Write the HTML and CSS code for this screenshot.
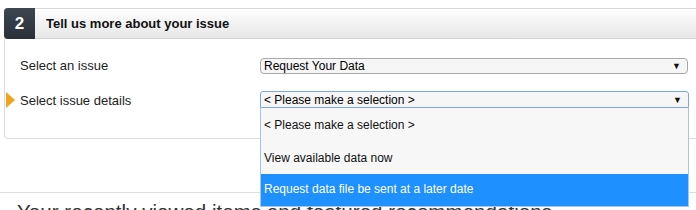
FILE: index.html
```html
<!DOCTYPE html>
<html>
<head>
<meta charset="utf-8">
<link rel="stylesheet" href="styles.css">
</head>
<body>
<div class="page">
  <section class="panel">
    <header class="panel-head">
      <span class="step">2</span>
      <h2 class="title">Tell us more about your issue</h2>
    </header>
    <div class="panel-body">
      <div class="row row-first">
        <label class="label">Select an issue</label>
        <div class="select">
          <span class="select-text">Request Your Data</span>
          <span class="arrow">&#9660;</span>
        </div>
      </div>
      <div class="row row-active">
        <span class="marker"></span>
        <label class="label">Select issue details</label>
        <div class="select-wrap">
          <div class="select select-focus">
            <span class="select-text">&lt; Please make a selection &gt;</span>
            <span class="arrow">&#9660;</span>
          </div>
          <ul class="options">
            <li class="option option-first">&lt; Please make a selection &gt;</li>
            <li class="option">View available data now</li>
            <li class="option option-hl">Request data file be sent at a later date</li>
          </ul>
        </div>
      </div>
    </div>
  </section>
  <hr class="rule">
  <h3 class="recent">Your recently viewed items and featured recommendations</h3>
</div>
</body>
</html>
```
FILE: styles.css
```css
html, body {
  margin: 0;
  padding: 0;
  background: #fff;
  overflow: hidden;
}
body {
  font-family: "Liberation Sans", Arial, sans-serif;
  color: #333;
  width: 696px;
  height: 210px;
}
.page {
  position: relative;
  width: 696px;
  height: 210px;
  overflow: hidden;
}
.panel {
  margin: 8px 0 0 4px;
  width: 720px;
  height: 131px;
  border: 1px solid #dcdcdc;
  border-top-color: #d8d8d8;
  border-radius: 4px;
  box-sizing: border-box;
  position: relative;
}
.panel-head {
  display: flex;
  align-items: center;
  margin: -1px 0 0 -1px;
  background: linear-gradient(#fefefe, #e7e7e7);
  border-top: 1px solid #d8d8d8;
  border-bottom: 1px solid #d4d4d4;
  border-radius: 4px 0 0 0;
  box-sizing: border-box;
  height: 31px;
}
.step {
  width: 31px;
  height: 31px;
  margin-top: -1px;
  margin-bottom: -1px;
  background: linear-gradient(#3d4650, #2a3038);
  border-radius: 4px 0 0 4px;
  color: #fff;
  font-weight: bold;
  font-size: 17px;
  display: flex;
  align-items: center;
  justify-content: center;
}
.title {
  margin: 0 0 0 11px;
  font-size: 13px;
  font-weight: bold;
  color: #111;
}
.panel-body {
  padding-top: 18px;
}
.row {
  display: flex;
  align-items: center;
  height: 17px;
  position: relative;
}
.row-active {
  margin-top: 17px;
}
.row-active .label {
  padding-top: 2px;
}
.label {
  width: 240px;
  padding-left: 15px;
  font-size: 13px;
  color: #222;
}
.select-wrap {
  position: relative;
  width: 429px;
}
.select {
  width: 428px;
  height: 16px;
  box-sizing: border-box;
  border: 1px solid #a9a9a9;
  border-radius: 4px;
  background: #f6f6f6;
  display: flex;
  align-items: center;
  justify-content: space-between;
  padding: 0 6px 0 3px;
  font-size: 12px;
  color: #000;
}
.select-focus {
  border-color: #7ea6e6;
  border-radius: 3px 3px 0 0;
  height: 17px;
  width: 429px;
}
.arrow {
  font-size: 9px;
  color: #111;
}
.marker {
  position: absolute;
  left: 1px;
  top: 1px;
  width: 0;
  height: 0;
  border-top: 8px solid transparent;
  border-bottom: 8px solid transparent;
  border-left: 9px solid #f5a21b;
}
.options {
  position: absolute;
  top: 17px;
  left: 0;
  width: 429px;
  margin: 0;
  padding: 0;
  list-style: none;
  background: #f7f7f7;
  border: 1px solid #a8c3ec;
  border-top: none;
  box-sizing: border-box;
  z-index: 2;
}
.option {
  height: 32px;
  line-height: 32px;
  padding-left: 3px;
  font-size: 12px;
  color: #111;
}
.option-first {
  height: 34px;
  line-height: 35px;
}
.option-hl {
  background: #1e90ff;
  color: #fff;
  line-height: 31px;
}
.rule {
  margin: 53px 0 0 0;
  border: none;
  border-top: 1px solid #ddd;
  height: 0;
}
.recent {
  margin: 7px 0 0 17px;
  font-size: 20.6px;
  font-weight: normal;
  color: #333;
  white-space: nowrap;
}
```
